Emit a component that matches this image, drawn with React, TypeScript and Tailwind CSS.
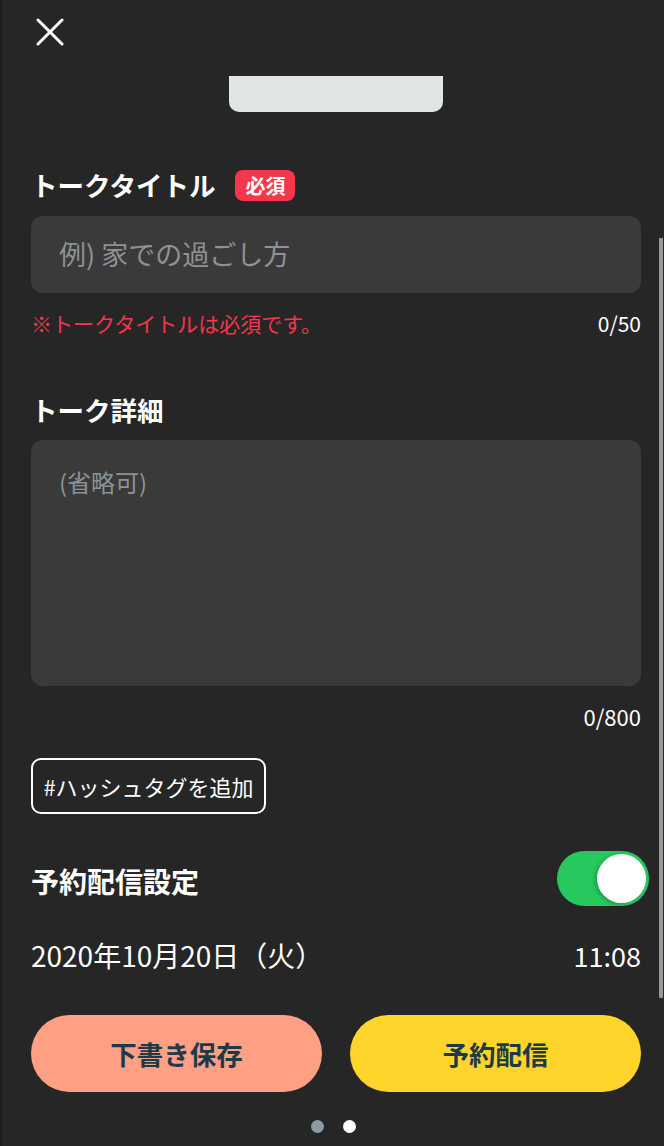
import React from "react";

const font = { fontFamily: '"Noto Sans CJK JP", "Noto Sans", Roboto, sans-serif' };

export default function App() {
  return (
    <div
      className="relative w-[664px] h-[1146px] bg-[#262626] text-white overflow-hidden border-l-2 border-[#1e1e1e]"
      style={font}
    >
      {/* close */}
      <div className="pt-[18px] pl-[33px] h-[76px]">
        <svg width="30" height="28" viewBox="0 0 30 28">
          <path d="M3 2 L27 26 M27 2 L3 26" stroke="#fff" strokeWidth="3" strokeLinecap="round" />
        </svg>
      </div>

      <div className="flex justify-center">
        <div className="w-[214px] h-[36px] bg-[#e1e5e6] rounded-b-[10px] ml-[6px]" />
      </div>

      <div className="pl-[29px] pr-[23px]">
        {/* title */}
        <div className="mt-[58px] flex items-center h-[31px]">
          <span className="text-[26.5px] font-bold leading-none">トークタイトル</span>
          <span className="ml-[20px] h-[31px] px-[10px] rounded-[8px] bg-[#f5364b] text-[20px] font-bold leading-[31px]">
            必須
          </span>
        </div>
        <div className="mt-[15px] h-[77px] rounded-[12px] bg-[#3a3a3a] flex items-center pl-[28px] text-[27px] text-[#8c9296]">
          例) 家での過ごし方
        </div>
        <div className="mt-[18px] flex justify-between items-center h-[24px]">
          <span className="text-[21px] text-[#f5364b] leading-none">※トークタイトルは必須です。</span>
          <span className="text-[21px] leading-none">0/50</span>
        </div>

        {/* detail */}
        <div className="mt-[60px] h-[30px] flex items-center">
          <span className="text-[26.5px] font-bold leading-none">トーク詳細</span>
        </div>
        <div className="mt-[15px] h-[246px] rounded-[12px] bg-[#3a3a3a] pl-[28px] pt-[30px] text-[24px] text-[#8c9296] leading-none">
          (省略可)
        </div>
        <div className="mt-[18px] flex justify-end items-center h-[24px]">
          <span className="text-[22px] leading-none">0/800</span>
        </div>

        <div className="mt-[30px]">
          <div className="inline-flex items-center justify-center w-[235px] h-[56px] border-2 border-white rounded-[10px] text-[22px]">
            #ハッシュタグを追加
          </div>
        </div>

        {/* schedule */}
        <div className="mt-[36px] flex items-center justify-between h-[56px]">
          <span className="text-[28px] font-bold leading-none pt-[6px]">予約配信設定</span>
          <div className="relative -mr-[8px] w-[92px] h-[55px] rounded-full bg-[#27c95f]">
            <div className="absolute right-[3px] top-[3px] w-[49px] h-[49px] rounded-full bg-white shadow-[-2px_1px_4px_rgba(0,0,0,0.25)]" />
          </div>
        </div>
        <div className="mt-[34px] flex items-center justify-between h-[30px]">
          <span className="text-[28px] leading-none">2020年10月20日（火）</span>
          <span className="text-[27px] leading-none">11:08</span>
        </div>

        <div className="mt-[45px] flex justify-between">
          <div className="w-[291px] h-[77px] rounded-full bg-[#ff9f84] flex items-center justify-center text-[26.5px] font-bold text-[#1d3a4a]">
            下書き保存
          </div>
          <div className="w-[291px] h-[77px] rounded-full bg-[#ffd52b] flex items-center justify-center text-[26.5px] font-bold text-[#1d3a4a]">
            予約配信
          </div>
        </div>

        <div className="mt-[28px] flex justify-center gap-[19px] -ml-[6px]">
          <div className="w-[13px] h-[13px] rounded-full bg-[#8a9ba6]" />
          <div className="w-[13px] h-[13px] rounded-full bg-white" />
        </div>
      </div>

      {/* scrollbar */}
      <div className="absolute left-[657px] top-[238px] w-[4px] h-[760px] bg-[#9a9a9a] rounded-[1px]" />
    </div>
  );
}
